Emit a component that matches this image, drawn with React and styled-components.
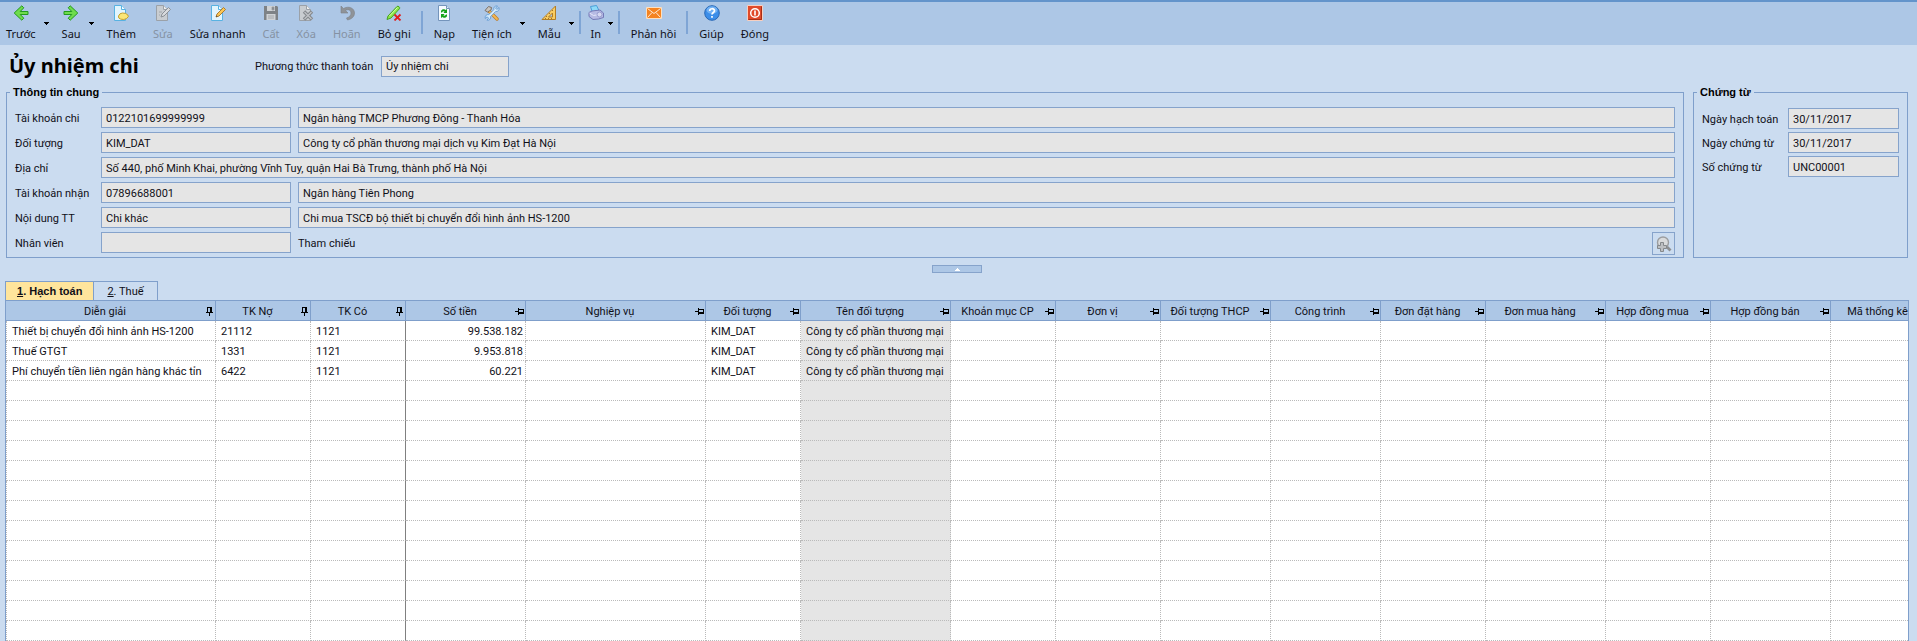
import { useState } from "react";
import styled, { createGlobalStyle } from "styled-components";

const GlobalStyle = createGlobalStyle`
  * {
    box-sizing: border-box;
  }
  body {
    margin: 0;
    background: #cbdcf0;
    color: #101018;
    font-family: Roboto, "Liberation Sans", sans-serif;
    font-size: 11px;
    line-height: 15px;
  }
  button, input {
    font: inherit;
    color: inherit;
  }
`

const Page = styled.div`
  overflow: hidden;
  min-height: 100vh;
`

/* ---------- toolbar ---------- */

const Toolbar = styled.header`
  display: flex;
  align-items: flex-start;
  gap: 5px;
  height: 45px;
  padding-top: 3px;
  border-top: 2px solid #6394cb;
  background: #adc7e6;
  font-family: "Noto Sans", sans-serif;
`
const ToolButton = styled.button`
  display: flex;
  flex-direction: column;
  align-items: center;
  gap: 4px;
  padding: 0 ${(p) => (p.$narrow ? "2px" : "6px")};
  border: 0;
  background: none;
  line-height: 18px;
  white-space: nowrap;

  svg {
    display: block;
  }
  &:disabled {
    color: #8592a3;
  }
`
const Split = styled.div`
  display: flex;
`
const DropButton = styled.button`
  display: flex;
  justify-content: center;
  width: 9px;
  height: 39px;
  padding: 17px 0 0;
  border: 0;
  background: none;
`
const Separator = styled.span`
  width: 2px;
  height: 23px;
  margin-top: 6px;
  margin-left: -1px;
  background: #7fa5d5;

  ${Split} + & {
    margin-left: -2px;
  }
`

/* ---------- form ---------- */

const Heading = styled.div`
  display: flex;
  align-items: center;
  height: 24px;
  margin: 9px 9px 7px;
`
const Title = styled.h1`
  width: 246px;
  margin: 0;
  font: bold 20px/24px "Noto Sans", sans-serif;
  color: #000;
`
const HeadLabel = styled.label`
  width: 126px;
`
const Field = styled.input`
  width: ${(p) => p.$width || "100%"};
  min-width: 0;
  height: 21px;
  padding: 1px 4px 0;
  border: 1px solid #86a3cb;
  border-radius: 0;
  background: #e5e5e5;
  outline: none;
`
const Panels = styled.div`
  display: flex;
  gap: 9px;
  margin: 0 9px 0 6px;
`
const Panel = styled.fieldset`
  flex: ${(p) => (p.$side ? "0 0 215px" : "1")};
  min-width: 0;
  margin: 0;
  padding: ${(p) => (p.$side ? "8px" : "7px")} 8px 2px;
  border: 1px solid #7f9fcb;
`
const Legend = styled.legend`
  margin-left: -5px;
  padding: 0 3px;
  font: bold 11px/15px "Liberation Sans", sans-serif;
  color: #000;
`
const InfoGrid = styled.div`
  display: grid;
  grid-template-columns: 86px 190px 1fr;
  row-gap: 4px;
`
const DocGrid = styled.div`
  display: grid;
  grid-template-columns: 86px 1fr;
  row-gap: 3px;
`
const Label = styled.label`
  padding-top: 2px;
  line-height: 19px;
  white-space: nowrap;
`
const Wide = styled.div`
  display: flex;
  grid-column: 2 / 4;
`
const Rest = styled.div`
  display: flex;
  justify-content: space-between;
  padding-left: 7px;
  line-height: 21px;
`
const SearchButton = styled.button`
  display: flex;
  align-items: center;
  justify-content: center;
  width: 23px;
  height: 23px;
  padding: 0;
  border: 1px solid #86a3cb;
  background: #cbdcf0;
`
const CollapseBar = styled.div`
  display: flex;
  justify-content: center;
  margin: 7px 9px 8px 6px;
`
const Collapser = styled.button`
  display: flex;
  align-items: center;
  justify-content: center;
  width: 50px;
  height: 8px;
  padding: 0;
  border: 1px solid #86a3cb;
  background: #adc7e6;
`

/* ---------- grid ---------- */

const Tabs = styled.div`
  display: flex;
  margin-left: 5px;
`
const Tab = styled.button`
  height: 19px;
  padding: 0 ${(p) => (p.$active ? "11px" : "13px")};
  border: 1px solid #7f9fcb;
  border-bottom: 0;
  background: ${(p) => (p.$active ? "#ffe59c" : "#cbdcf0")};
  font: ${(p) => (p.$active ? 'bold 11px/17px "Liberation Sans", sans-serif' : "inherit")};

  & + & {
    border-left: 0;
  }
`
const TableFrame = styled.div`
  overflow: hidden;
  margin: 0 8px 0 5px;
  border: 1px solid #7f9fcb;
  border-bottom: 0;
  background: #fff;
`
const Table = styled.table`
  width: 1930px;
  table-layout: fixed;
  border-collapse: separate;
  border-spacing: 0;
`
const Col = styled.col`
  width: ${(p) => p.$width}px;
`
const HeadCell = styled.th`
  height: 20px;
  padding: 1px 1px 0;
  border-right: 1px solid #7f9fcb;
  border-bottom: 1px solid #7f9fcb;
  background: #adc7e6;
  font-weight: normal;
`
const HeadInner = styled.div`
  display: flex;
  align-items: center;
  gap: 2px;
`
const HeadText = styled.span`
  flex: 1;
  text-align: center;
  white-space: nowrap;
`
const Cell = styled.td`
  height: 20px;
  padding: 1px ${(p) => (p.$right ? "2px" : "5px")} 0 5px;
  border-right: 1px ${(p) => (p.$frozen ? "solid #808080" : "dotted #bababa")};
  border-bottom: 1px dotted #bababa;
  background: ${(p) => (p.$gray ? "#e5e5e5" : "#fff")};
  text-align: ${(p) => (p.$right ? "right" : "left")};
  white-space: nowrap;
  overflow: hidden;

  &:first-child {
    border-left: 1px dotted #bababa;
  }
`

/* ---------- icons ---------- */

const Svg = ({ children, w = 16, h = 16, crisp }) => (
  <svg width={w} height={h} viewBox={`0 0 ${w} ${h}`} fill="none" aria-hidden="true" shapeRendering={crisp ? "crispEdges" : undefined}>
    {children}
  </svg>
)

const arrowPath = "M15 6.5v3H7.2l3.6 3.7-2 2L1.2 8l7.6-7.2 2 2-3.6 3.7z"

const IconBack = () => (
  <Svg><path d={arrowPath} fill="#6fdc4c" stroke="#239a1d" strokeLinejoin="round" /></Svg>
)
const IconNext = () => (
  <Svg><path d={arrowPath} transform="matrix(-1 0 0 1 16 0)" fill="#6fdc4c" stroke="#239a1d" strokeLinejoin="round" /></Svg>
)
const Sheet = ({ fill, stroke }) => (
  <>
    <path d="M1.5.5h7l4 4v11h-11z" fill={fill} stroke={stroke} />
    <path d="M8.5.5v4h4" fill="#fff" fillOpacity=".7" stroke={stroke} />
  </>
)
const IconAdd = () => (
  <Svg>
    <Sheet fill="#e2f5fd" stroke="#58b2e2" />
    <path d="M5.5 11 7 8.800l2.500-.8 3 .4 2.300 1.500.5 1.800-2 2-2.500.8-3-.3-2-1.200z" fill="#fbe676" stroke="#c5a02c" />
  </Svg>
)
const IconEdit = () => (
  <Svg>
    <Sheet fill="#c9cdd1" stroke="#9ba1a8" />
    <path d="m6 12 1-3 6.500-6.500 2 2L9 11z" fill="#d8dadd" stroke="#8c9197" />
    <path d="M4 7h3M4 10h1" stroke="#a0a5aa" />
  </Svg>
)
const IconQuickEdit = () => (
  <Svg>
    <Sheet fill="#e2f5fd" stroke="#58b2e2" />
    <path d="m6 12 1-3 6.500-6.500 2 2L9 11z" fill="#fcc755" stroke="#ab7c32" />
    <path d="m6 12 .5-1.500 1 1z" fill="#444" />
  </Svg>
)
const IconSave = () => (
  <Svg>
    <path d="M1 1h13l1 1v13H1z" fill="#7e8286" />
    <path d="M4 1h8v5H4zM3.500 9h9v6h-9z" fill="#cfd2d5" />
    <path d="M9 2h2v3H9zM5 11h6M5 13h6" fill="#7e8286" stroke="#9a9da1" strokeWidth=".8" />
  </Svg>
)
const IconDelete = () => (
  <Svg>
    <Sheet fill="#c9cdd1" stroke="#9ba1a8" />
    <path d="m6 6.500 8 8m0-8-8 8" stroke="#84888d" strokeWidth="3.400" />
    <path d="m6.500 7 7 7m0-7-7 7" stroke="#c1c4c8" strokeWidth="1.200" />
  </Svg>
)
const IconUndo = () => (
  <Svg>
    <path d="M2 1v7h7L6.500 5.500C9 3.800 12 5 12 8c0 2.500-1.500 4-4.500 5l1 2C13 14 15.500 11.500 15.500 8c0-5-6-7.500-11-4.500z" fill="#8f9398" stroke="#7d8186" strokeWidth=".6" />
  </Svg>
)
const IconUnpost = () => (
  <Svg>
    <path d="M1 14.500 2 11 11 1.500c1-1 3.500.8 2.500 2.200L5 13z" fill="#8ee64a" stroke="#44a51e" />
    <path d="m3.500 11 8-8.500" stroke="#d5ffb0" />
    <path d="m8.500 9.500 6 6m0-6-6 6" stroke="#df1f1f" strokeWidth="1.800" />
  </Svg>
)
const IconReload = () => (
  <Svg>
    <path d="M2.500.5h8l3 3v12h-11z" fill="#f6fbff" stroke="#7494bb" />
    <path d="M10.500.5v3h3" fill="#dcebf8" stroke="#7494bb" />
    <path d="M5 7.500V5.800C6.500 3.500 9 4 9.500 5l1.500-1v4H7.500L8.500 6.500C7.500 6 6.500 6.500 6 7.500zM11 9.500v1.700c-1.500 2.300-4 1.800-4.500.8L5 13V9h3.500l-1 1.500c1 .5 2 0 2.500-1z" fill="#13a31a" />
  </Svg>
)
const IconTools = () => (
  <Svg>
    <path d="m5 6 8 8" stroke="#bd7e2c" strokeWidth="3.400" strokeLinecap="round" />
    <path d="m5.500 6.500 7.500 7.500" stroke="#f3b852" strokeWidth="1.800" strokeLinecap="round" />
    <path d="M1 5.500 4.500 1.500l3 1L7 5 3.500 7z" fill="#c8c4bf" stroke="#7b7168" />
    <path d="M15 2.500 12.800 4.500 11.500 3.200 13.500 1C11 .4 9.200 2.500 9.800 4.700l-5 5C2.500 9 .7 11 1.200 13.500l2-1.700 1.500 1.500L3 15.200c2.500.5 4.200-1.500 3.600-3.700l5-5c2.300.5 4-1.500 3.400-4z" fill="#d4eafb" stroke="#5b95d0" strokeWidth=".8" />
  </Svg>
)
const IconRuler = () => (
  <Svg>
    <path d="M14.500 1v13.500H1z" fill="#f9cc62" stroke="#b27d25" strokeLinejoin="round" />
    <path d="M11.500 8v4h-4z" fill="#adc7e6" stroke="#b27d25" />
    <path d="m11 5 1 1M8 8l1 1m-4 2 1 1m-1.500 1v1m3-1v1m3-1v1" stroke="#8d5d17" strokeWidth=".8" />
  </Svg>
)
const IconPrint = () => (
  <Svg>
    <path d="m2.500 1.500 6-1 2.500 5-6.500 2z" fill="#8edaf9" stroke="#4a9fd8" />
    <path d="M1 7.500 4 6l8-1 3.500 3v4.500l-5 1.500L5 14.500l-4-3z" fill="#b7bbe4" stroke="#7479b6" strokeLinejoin="round" />
    <path d="m1.500 8 4 2.500 5.500-1" stroke="#e5e7fa" />
    <circle cx="11.500" cy="9.500" r="2.500" fill="#d6d8f2" stroke="#8a8fc5" strokeWidth=".8" />
  </Svg>
)
const IconMail = () => (
  <Svg>
    <path d="M.5 2.500h15v11H.5z" fill="#f5831f" stroke="#fbe0c2" />
    <path d="m1.500 3.500 6.500 5 6.500-5M1.500 12.500 6 7.500m8.500 5L10 7.500" stroke="#ffe9d3" />
  </Svg>
)
const IconHelp = () => (
  <Svg>
    <circle cx="8" cy="8" r="7.300" fill="#3c8ee9" stroke="#2867b5" />
    <ellipse cx="8" cy="5" rx="5.500" ry="3.800" fill="#8fc5fb" opacity=".65" />
    <path d="M5.700 6C5.700 3 10.500 3 10.500 5.800 10.500 7.500 8 7.600 8 9.600M8 11v1.700" stroke="#fff" strokeWidth="1.700" />
  </Svg>
)
const IconClose = () => (
  <Svg>
    <path d="M.5.5h15v15H.5z" fill="#e04a2a" stroke="#f7cfc0" />
    <path d="M1.500 14.500h13v-13" stroke="#a92f17" />
    <circle cx="8" cy="8" r="4.300" stroke="#fff" strokeWidth="1.500" />
    <path d="M8 5.500v5" stroke="#fff" strokeWidth="1.600" />
  </Svg>
)
const IconSearch = () => (
  <Svg>
    <path d="m10.500 10.500 4 4" stroke="#8d8f92" strokeWidth="2.800" />
    <circle cx="7" cy="6.500" r="5.500" fill="#d9dadb" stroke="#9b9da0" strokeWidth="1.400" />
    <path d="M4.500 6.500h3v3h3v3h-3v3h-3v-3h-3v-3h3z" fill="#bdbfc2" stroke="#85888b" />
  </Svg>
)
const Caret = () => (
  <Svg w={5} h={3} crisp><path d="M0 0h5v1H0zM1 1h3v1H1zM2 2h1v1H2z" fill="#000" /></Svg>
)
const CaretUp = () => (
  <Svg w={5} h={3} crisp><path d="M2 0h1v1H2zM1 1h3v1H1zM0 2h5v1H0z" fill="#fff" /></Svg>
)
const Pin = ({ fixed }) => (
  <Svg w={9} h={9} crisp>
    {fixed ? (
      <path d="M2 0h5v5h1v1H5v3H4V6H1V5h1zM3 1v4h2V1z" fillRule="evenodd" fill="#000" />
    ) : (
      <path d="M0 4h3V1h1v1h5v5H4v1H3V5H0zM4 3v2h4V3z" fillRule="evenodd" fill="#000" />
    )}
  </Svg>
)

/* ---------- data ---------- */

const tools = [
  { text: "Trước", icon: IconBack, drop: true },
  { text: "Sau", icon: IconNext, drop: true },
  { text: "Thêm", icon: IconAdd },
  { text: "Sửa", icon: IconEdit, disabled: true },
  { text: "Sửa nhanh", icon: IconQuickEdit },
  { text: "Cất", icon: IconSave, disabled: true },
  { text: "Xóa", icon: IconDelete, disabled: true },
  { text: "Hoãn", icon: IconUndo, disabled: true },
  { text: "Bỏ ghi", icon: IconUnpost },
  null,
  { text: "Nạp", icon: IconReload },
  { text: "Tiện ích", icon: IconTools, drop: true },
  { text: "Mẫu", icon: IconRuler, drop: true },
  null,
  { text: "In", icon: IconPrint, drop: true, narrow: true },
  null,
  { text: "Phản hồi", icon: IconMail },
  null,
  { text: "Giúp", icon: IconHelp },
  { text: "Đóng", icon: IconClose },
];

const columns = [
  { key: "dienGiai", title: "Diễn giải", width: 210, fixed: true },
  { key: "no", title: "TK Nợ", width: 95, fixed: true },
  { key: "co", title: "TK Có", width: 95, fixed: true, frozen: true },
  { key: "soTien", title: "Số tiền", width: 120, right: true },
  { key: "nghiepVu", title: "Nghiệp vụ", width: 180 },
  { key: "doiTuong", title: "Đối tượng", width: 95 },
  { key: "tenDoiTuong", title: "Tên đối tượng", width: 150, gray: true },
  { key: "khoanMuc", title: "Khoản mục CP", width: 105 },
  { key: "donVi", title: "Đơn vị", width: 105 },
  { key: "thcp", title: "Đối tượng THCP", width: 110 },
  { key: "congTrinh", title: "Công trình", width: 110 },
  { key: "donDatHang", title: "Đơn đặt hàng", width: 105 },
  { key: "donMuaHang", title: "Đơn mua hàng", width: 120 },
  { key: "hopDongMua", title: "Hợp đồng mua", width: 105 },
  { key: "hopDongBan", title: "Hợp đồng bán", width: 120 },
  { key: "thongKe", title: "Mã thống kê", width: 105 },
];

const entry = (dienGiai, no, soTien) => ({
  dienGiai,
  no,
  co: "1121",
  soTien,
  doiTuong: "KIM_DAT",
  tenDoiTuong: "Công ty cổ phần thương mại",
});

const rows = [
  entry("Thiết bị chuyển đổi hình ảnh HS-1200", "21112", "99.538.182"),
  entry("Thuế GTGT", "1331", "9.953.818"),
  entry("Phí chuyển tiền liên ngân hàng khác tỉn", "6422", "60.221"),
  ...Array.from({ length: 13 }, () => ({})),
];

function Tool({ tool }) {
  const Icon = tool.icon;
  const button = (
    <ToolButton type="button" disabled={tool.disabled} $narrow={tool.narrow}>
      <Icon />
      {tool.text}
    </ToolButton>
  );
  if (!tool.drop) return button;
  return (
    <Split>
      {button}
      <DropButton type="button" aria-label={tool.text}><Caret /></DropButton>
    </Split>
  );
}

function PairRow({ id, label, code, name }) {
  return (
    <>
      <Label htmlFor={id}>{label}</Label>
      <Field id={id} defaultValue={code} readOnly />
      <Rest>
        <Field aria-label={label} defaultValue={name} readOnly />
      </Rest>
    </>
  );
}

function DocRow({ id, label, value }) {
  return (
    <>
      <Label htmlFor={id}>{label}</Label>
      <Field id={id} defaultValue={value} readOnly />
    </>
  );
}

function App() {
  const [tab, setTab] = useState(1);

  return (
    <Page>
      <GlobalStyle />
      <Toolbar>
        {tools.map((tool, i) => (tool ? <Tool key={i} tool={tool} /> : <Separator key={i} />))}
      </Toolbar>

      <Heading>
        <Title>Ủy nhiệm chi</Title>
        <HeadLabel htmlFor="phuongThuc">Phương thức thanh toán</HeadLabel>
        <Field id="phuongThuc" $width="128px" defaultValue="Ủy nhiệm chi" readOnly />
      </Heading>

      <Panels>
        <Panel>
          <Legend>Thông tin chung</Legend>
          <InfoGrid>
            <PairRow id="tkChi" label="Tài khoản chi" code="0122101699999999" name="Ngân hàng TMCP Phương Đông - Thanh Hóa" />
            <PairRow id="doiTuong" label="Đối tượng" code="KIM_DAT" name="Công ty cổ phần thương mại dịch vụ Kim Đạt Hà Nội" />
            <Label htmlFor="diaChi">Địa chỉ</Label>
            <Wide>
              <Field id="diaChi" defaultValue="Số 440, phố Minh Khai, phường Vĩnh Tuy, quận Hai Bà Trưng, thành phố Hà Nội" readOnly />
            </Wide>
            <PairRow id="tkNhan" label="Tài khoản nhận" code="07896688001" name="Ngân hàng Tiên Phong" />
            <PairRow id="noiDung" label="Nội dung TT" code="Chi khác" name="Chi mua TSCĐ bộ thiết bị chuyển đổi hình ảnh HS-1200" />
            <Label htmlFor="nhanVien">Nhân viên</Label>
            <Field id="nhanVien" defaultValue="" readOnly />
            <Rest>
              <Label as="span">Tham chiếu</Label>
              <SearchButton type="button" aria-label="Tham chiếu"><IconSearch /></SearchButton>
            </Rest>
          </InfoGrid>
        </Panel>
        <Panel $side>
          <Legend>Chứng từ</Legend>
          <DocGrid>
            <DocRow id="ngayHachToan" label="Ngày hạch toán" value="30/11/2017" />
            <DocRow id="ngayChungTu" label="Ngày chứng từ" value="30/11/2017" />
            <DocRow id="soChungTu" label="Số chứng từ" value="UNC00001" />
          </DocGrid>
        </Panel>
      </Panels>

      <CollapseBar>
        <Collapser type="button" aria-label="Thông tin chung"><CaretUp /></Collapser>
      </CollapseBar>

      <Tabs>
        <Tab type="button" $active={tab === 1} onClick={() => setTab(1)}><u>1</u>. Hạch toán</Tab>
        <Tab type="button" $active={tab === 2} onClick={() => setTab(2)}><u>2</u>. Thuế</Tab>
      </Tabs>
      <TableFrame>
        <Table>
          <colgroup>
            {columns.map((c) => <Col key={c.key} $width={c.width} />)}
          </colgroup>
          <thead>
            <tr>
              {columns.map((c) => (
                <HeadCell key={c.key}>
                  <HeadInner>
                    <HeadText>{c.title}</HeadText>
                    <Pin fixed={c.fixed} />
                  </HeadInner>
                </HeadCell>
              ))}
            </tr>
          </thead>
          <tbody>
            {rows.map((row, i) => (
              <tr key={i}>
                {columns.map((c) => (
                  <Cell key={c.key} $right={c.right} $frozen={c.frozen} $gray={c.gray}>{row[c.key]}</Cell>
                ))}
              </tr>
            ))}
          </tbody>
        </Table>
      </TableFrame>
    </Page>
  )
}

export default App
